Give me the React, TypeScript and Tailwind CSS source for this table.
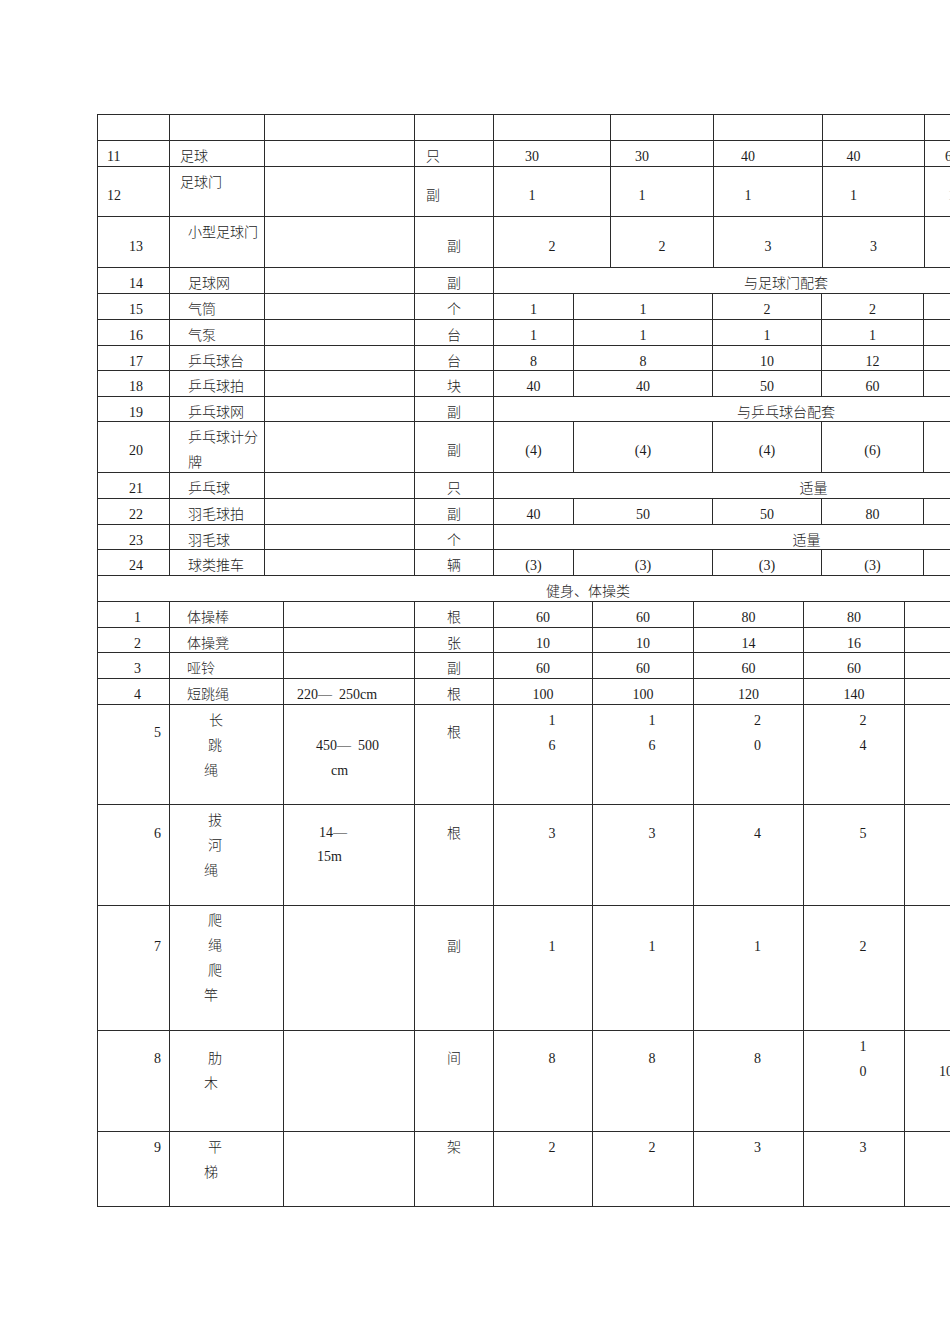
import React from 'react';

const S1 = ['w-[72px]', 'w-[95px]', 'w-[150px]', 'w-[79px]', 'w-[117px]', 'w-[103px]', 'w-[109px]', 'w-[102px]', 'w-[154px]'];
const S2 = ['w-[72px]', 'w-[95px]', 'w-[150px]', 'w-[79px]', 'w-[80px]', 'w-[139px]', 'w-[109px]', 'w-[102px]', 'w-[155px]'];
const S3 = ['w-[72px]', 'w-[114px]', 'w-[131px]', 'w-[79px]', 'w-[99px]', 'w-[101px]', 'w-[110px]', 'w-[101px]', 'w-[174px]'];

function Cell({ w, cls = '', children }: { w: string; cls?: string; children?: React.ReactNode }) {
    return <div className={`shrink-0 border-l border-t border-[#2b2b2b] ${w} ${cls}`}>{children}</div>;
}

function Row({ h, children }: { h: string; children: React.ReactNode }) {
    return <div className={`flex w-[981px] ${h}`}>{children}</div>;
}

// ball section rows (14 - 24); the last column runs past the page edge
const ballRows: { no: string; name: string[]; unit: string; h: string; vals?: string[]; span?: string; spanCls?: string }[] = [
    { no: '14', name: ['足球网'], unit: '副', h: 'h-[26px]', span: '与足球门配套', spanCls: 'text-center' },
    { no: '15', name: ['气筒'], unit: '个', h: 'h-[26px]', vals: ['1', '1', '2', '2'] },
    { no: '16', name: ['气泵'], unit: '台', h: 'h-[26px]', vals: ['1', '1', '1', '1'] },
    { no: '17', name: ['乒乓球台'], unit: '台', h: 'h-[25px]', vals: ['8', '8', '10', '12'] },
    { no: '18', name: ['乒乓球拍'], unit: '块', h: 'h-[26px]', vals: ['40', '40', '50', '60'] },
    { no: '19', name: ['乒乓球网'], unit: '副', h: 'h-[25px]', span: '与乒乓球台配套', spanCls: 'text-center' },
    { no: '20', name: ['乒乓球计分', '牌'], unit: '副', h: 'h-[51px]', vals: ['(4)', '(4)', '(4)', '(6)'] },
    { no: '21', name: ['乒乓球'], unit: '只', h: 'h-[26px]', span: '适量', spanCls: 'text-center pl-[55px]' },
    { no: '22', name: ['羽毛球拍'], unit: '副', h: 'h-[26px]', vals: ['40', '50', '50', '80'] },
    { no: '23', name: ['羽毛球'], unit: '个', h: 'h-[25px]', span: '适量', spanCls: 'text-center pl-[41px]' },
    { no: '24', name: ['球类推车'], unit: '辆', h: 'h-[26px]', vals: ['(3)', '(3)', '(3)', '(3)'] },
];

const gymRows = [
    { no: '1', name: '体操棒', spec: '', unit: '根', h: 'h-[26px]', vals: ['60', '60', '80', '80'] },
    { no: '2', name: '体操凳', spec: '', unit: '张', h: 'h-[25px]', vals: ['10', '10', '14', '16'] },
    { no: '3', name: '哑铃', spec: '', unit: '副', h: 'h-[26px]', vals: ['60', '60', '60', '60'] },
    { no: '4', name: '短跳绳', spec: '220—  250cm', unit: '根', h: 'h-[26px]', vals: ['100', '100', '120', '140'] },
];

export default function App() {
    return (
        <div className="w-[950px] h-[1344px] overflow-hidden bg-white text-[#1c1c1c] text-[14px] font-light leading-[25px] font-['Liberation_Serif','Noto_Sans_CJK_SC',serif]">
            <div className="pt-[114px] pl-[97px]">
                <div className="w-[981px] border-b border-[#2b2b2b]">
                    {/* header row */}
                    <Row h="h-[26px]">
                        {S1.map((w, i) => <Cell key={i} w={w} />)}
                    </Row>

                    {/* 11 */}
                    <Row h="h-[26px]">
                        <Cell w={S1[0]} cls="pt-[3px] pl-[9px]">11</Cell>
                        <Cell w={S1[1]} cls="pt-[3px] pl-[10px]">足球</Cell>
                        <Cell w={S1[2]} />
                        <Cell w={S1[3]} cls="pt-[3px] pl-[11px]">只</Cell>
                        {['30', '30', '40', '40'].map((v, i) => (
                            <Cell key={i} w={S1[4 + i]} cls="pt-[3px] text-center pr-[40px]">{v}</Cell>
                        ))}
                        <Cell w={S1[8]} cls="pt-[3px] pl-[20px]">6</Cell>
                    </Row>

                    {/* 12 */}
                    <Row h="h-[50px]">
                        <Cell w={S1[0]} cls="pt-[16px] pl-[9px]">12</Cell>
                        <Cell w={S1[1]} cls="pt-[3px] pl-[10px]">足球门</Cell>
                        <Cell w={S1[2]} />
                        <Cell w={S1[3]} cls="pt-[16px] pl-[11px]">副</Cell>
                        {['1', '1', '1', '1'].map((v, i) => (
                            <Cell key={i} w={S1[4 + i]} cls="pt-[16px] text-center pr-[40px]">{v}</Cell>
                        ))}
                        <Cell w={S1[8]} cls="pt-[16px] pl-[23px] text-[#bbbbbb]">1</Cell>
                    </Row>

                    {/* 13 */}
                    <Row h="h-[51px]">
                        <Cell w={S1[0]} cls="pt-[17px] text-center pl-[5px]">13</Cell>
                        <Cell w={S1[1]} cls="pt-[3px] pl-[18px]">小型足球门</Cell>
                        <Cell w={S1[2]} />
                        <Cell w={S1[3]} cls="pt-[17px] text-center">副</Cell>
                        {['2', '2', '3', '3'].map((v, i) => (
                            <Cell key={i} w={S1[4 + i]} cls="pt-[17px] text-center">{v}</Cell>
                        ))}
                        <Cell w={S1[8]} />
                    </Row>

                    {/* 14 - 24 */}
                    {ballRows.map((r) => {
                        const tall = r.name.length > 1;
                        const pt = tall ? 'pt-[16px]' : 'pt-[3px]';
                        return (
                            <Row key={r.no} h={r.h}>
                                <Cell w={S2[0]} cls={`${pt} text-center pl-[5px]`}>{r.no}</Cell>
                                <Cell w={S2[1]} cls="pt-[3px] pl-[18px]">
                                    {r.name.map((n) => <div key={n}>{n}</div>)}
                                </Cell>
                                <Cell w={S2[2]} />
                                <Cell w={S2[3]} cls={`${pt} text-center`}>{r.unit}</Cell>
                                {r.span ? (
                                    <Cell w="w-[585px]" cls={`pt-[3px] ${r.spanCls}`}>{r.span}</Cell>
                                ) : (
                                    <>
                                        {r.vals!.map((v, i) => (
                                            <Cell key={i} w={S2[4 + i]} cls={`${pt} text-center`}>{v}</Cell>
                                        ))}
                                        <Cell w={S2[8]} />
                                    </>
                                )}
                            </Row>
                        );
                    })}

                    {/* section title */}
                    <Row h="h-[26px]">
                        <Cell w="w-[981px]" cls="pt-[3px] text-center">健身、体操类</Cell>
                    </Row>

                    {/* 1 - 4 */}
                    {gymRows.map((r) => (
                        <Row key={r.no} h={r.h}>
                            <Cell w={S3[0]} cls="pt-[3px] text-center pl-[8px]">{r.no}</Cell>
                            <Cell w={S3[1]} cls="pt-[3px] pl-[17px]">{r.name}</Cell>
                            <Cell w={S3[2]} cls="pt-[3px] pl-[13px] whitespace-pre">{r.spec}</Cell>
                            <Cell w={S3[3]} cls="pt-[3px] text-center">{r.unit}</Cell>
                            {r.vals.map((v, i) => (
                                <Cell key={i} w={S3[4 + i]} cls="pt-[3px] text-center">{v}</Cell>
                            ))}
                            <Cell w={S3[8]} />
                        </Row>
                    ))}

                    {/* 5 长跳绳 */}
                    <Row h="h-[100px]">
                        <Cell w={S3[0]} cls="pt-[15px] text-right pr-[8px]">5</Cell>
                        <Cell w={S3[1]} cls="pt-[3px]">
                            <div className="pl-[39px]">长</div>
                            <div className="pl-[38px]">跳</div>
                            <div className="pl-[34px]">绳</div>
                        </Cell>
                        <Cell w={S3[2]} cls="pt-[28px]">
                            <div className="pl-[32px] whitespace-pre">450—  500</div>
                            <div className="pl-[47px]">cm</div>
                        </Cell>
                        <Cell w={S3[3]} cls="pt-[15px] text-center">根</Cell>
                        {[['1', '6'], ['1', '6'], ['2', '0'], ['2', '4']].map((v, i) => (
                            <Cell key={i} w={S3[4 + i]} cls="pt-[3px] text-center pl-[18px]">
                                {v.map((d, j) => <div key={j}>{d}</div>)}
                            </Cell>
                        ))}
                        <Cell w={S3[8]} />
                    </Row>

                    {/* 6 拔河绳 */}
                    <Row h="h-[101px]">
                        <Cell w={S3[0]} cls="pt-[16px] text-right pr-[8px]">6</Cell>
                        <Cell w={S3[1]} cls="pt-[3px]">
                            <div className="pl-[38px]">拔</div>
                            <div className="pl-[38px]">河</div>
                            <div className="pl-[34px]">绳</div>
                        </Cell>
                        <Cell w={S3[2]} cls="pt-[16px]">
                            <div className="pl-[35px] leading-[24px]">14—</div>
                            <div className="pl-[33px] leading-[24px]">15m</div>
                        </Cell>
                        <Cell w={S3[3]} cls="pt-[16px] text-center">根</Cell>
                        {['3', '3', '4', '5'].map((v, i) => (
                            <Cell key={i} w={S3[4 + i]} cls="pt-[16px] text-center pl-[18px]">{v}</Cell>
                        ))}
                        <Cell w={S3[8]} />
                    </Row>

                    {/* 7 爬绳爬竿 */}
                    <Row h="h-[125px]">
                        <Cell w={S3[0]} cls="pt-[28px] text-right pr-[8px]">7</Cell>
                        <Cell w={S3[1]} cls="pt-[2px]">
                            <div className="pl-[38px]">爬</div>
                            <div className="pl-[38px]">绳</div>
                            <div className="pl-[38px]">爬</div>
                            <div className="pl-[34px]">竿</div>
                        </Cell>
                        <Cell w={S3[2]} />
                        <Cell w={S3[3]} cls="pt-[28px] text-center">副</Cell>
                        {['1', '1', '1', '2'].map((v, i) => (
                            <Cell key={i} w={S3[4 + i]} cls="pt-[28px] text-center pl-[18px]">{v}</Cell>
                        ))}
                        <Cell w={S3[8]} />
                    </Row>

                    {/* 8 肋木 */}
                    <Row h="h-[101px]">
                        <Cell w={S3[0]} cls="pt-[15px] text-right pr-[8px]">8</Cell>
                        <Cell w={S3[1]} cls="pt-[15px]">
                            <div className="pl-[38px]">肋</div>
                            <div className="pl-[34px]">木</div>
                        </Cell>
                        <Cell w={S3[2]} />
                        <Cell w={S3[3]} cls="pt-[15px] text-center">间</Cell>
                        {['8', '8', '8'].map((v, i) => (
                            <Cell key={i} w={S3[4 + i]} cls="pt-[15px] text-center pl-[18px]">{v}</Cell>
                        ))}
                        <Cell w={S3[7]} cls="pt-[3px] text-center pl-[18px]">
                            <div>1</div>
                            <div>0</div>
                        </Cell>
                        <Cell w={S3[8]} cls="pt-[28px] pl-[34px]">10</Cell>
                    </Row>

                    {/* 9 平梯 */}
                    <Row h="h-[75px]">
                        <Cell w={S3[0]} cls="pt-[3px] text-right pr-[8px]">9</Cell>
                        <Cell w={S3[1]} cls="pt-[3px]">
                            <div className="pl-[38px]">平</div>
                            <div className="pl-[34px]">梯</div>
                        </Cell>
                        <Cell w={S3[2]} />
                        <Cell w={S3[3]} cls="pt-[3px] text-center">架</Cell>
                        {['2', '2', '3', '3'].map((v, i) => (
                            <Cell key={i} w={S3[4 + i]} cls="pt-[3px] text-center pl-[18px]">{v}</Cell>
                        ))}
                        <Cell w={S3[8]} />
                    </Row>
                </div>
            </div>
        </div>
    );
}
